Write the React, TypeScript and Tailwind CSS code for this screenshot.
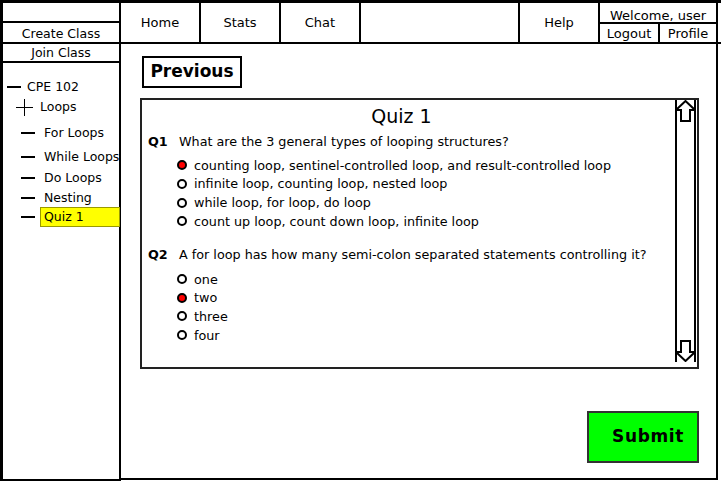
import React from "react";

const FONT = "font-['DejaVu_Sans',sans-serif]";

type Opt = { label: string; checked?: boolean };

const QUESTIONS: { id: string; text: string; options: Opt[] }[] = [
  {
    id: "Q1",
    text: "What are the 3 general types of looping structures?",
    options: [
      { label: "counting loop, sentinel-controlled loop, and result-controlled loop", checked: true },
      { label: "infinite loop, counting loop, nested loop" },
      { label: "while loop, for loop, do loop" },
      { label: "count up loop, count down loop, infinite loop" },
    ],
  },
  {
    id: "Q2",
    text: "A for loop has how many semi-colon separated statements controlling it?",
    options: [
      { label: "one" },
      { label: "two", checked: true },
      { label: "three" },
      { label: "four" },
    ],
  },
];

const TREE = [
  { label: "For Loops", top: 61 },
  { label: "While Loops", top: 85 },
  { label: "Do Loops", top: 106 },
  { label: "Nesting", top: 126 },
];

function Radio({ checked }: { checked?: boolean }) {
  return (
    <span
      className={`inline-block w-[10px] h-[10px] rounded-full border-2 border-black ${
        checked ? "bg-[#ff0000]" : "bg-white"
      }`}
    />
  );
}

function Dash() {
  return <span className="inline-block w-[14px] h-[2px] bg-black" />;
}

function Tab({ label, w }: { label: string; w: string }) {
  return (
    <div className={`${w} h-full flex items-center justify-center border-r-2 border-black`}>
      {label}
    </div>
  );
}

export default function App() {
  return (
    <div className={`w-[721px] h-[482px] bg-white text-black ${FONT} flex`}>
      {/* Sidebar */}
      <div className="w-[121px] h-[481px] border-l-[3px] border-t-[3px] border-r-2 border-b-2 border-black flex flex-col text-[12.5px]">
        <div className="h-[20px] border-b-2 border-black" />
        <div className="h-[21px] border-b-2 border-black flex items-end justify-center leading-none pb-[2px]">
          Create Class
        </div>
        <div className="h-[19px] border-b-2 border-black flex items-center justify-center pt-[2px]">
          Join Class
        </div>
        <div className="relative flex-1">
          <div className="absolute left-[4px] top-[15px] flex items-center gap-[6px]">
            <Dash />
            <span>CPE 102</span>
          </div>
          <div className="absolute left-[13px] top-[35px] flex items-center gap-[7px]">
            <svg width="17" height="17" viewBox="0 0 17 17">
              <path d="M0 8.5 H17 M8.5 0 V17" stroke="#000" strokeWidth="1" />
            </svg>
            <span>Loops</span>
          </div>
          {TREE.map((t) => (
            <div
              key={t.label}
              className="absolute left-[18px] flex items-center gap-[9px] whitespace-nowrap"
              style={{ top: t.top }}
            >
              <Dash />
              <span>{t.label}</span>
            </div>
          ))}
          <div className="absolute left-[18px] top-[144px] flex items-center gap-[5px]">
            <Dash />
            <span className="w-[80px] h-[20px] bg-[#ffff00] border border-[#999900] flex items-center pl-[3px]">
              Quiz 1
            </span>
          </div>
        </div>
      </div>

      {/* Right column */}
      <div className="flex-1 flex flex-col">
        <div className="h-[44px] border-t-[3px] border-b-2 border-black flex text-[13px]">
          <Tab label="Home" w="w-[80px]" />
          <Tab label="Stats" w="w-[80px]" />
          <Tab label="Chat" w="w-[80px]" />
          <div className="w-[159px] h-full border-r-2 border-black" />
          <Tab label="Help" w="w-[80px]" />
          <div className="w-[118px] h-full flex flex-col border-r-2 border-black">
            <div className="h-[21px] border-b-2 border-black flex items-start justify-center leading-none pt-[6px]">
              Welcome, user
            </div>
            <div className="flex-1 flex">
              <div className="w-[60px] border-r-2 border-black flex items-center justify-center">
                Logout
              </div>
              <div className="flex-1 flex items-center justify-center">Profile</div>
            </div>
          </div>
        </div>

        <div className="w-[597px] h-[436px] border-r-2 border-b-2 border-black flex flex-col pl-[19px] pt-[12px]">
          <div className="ml-[2px] w-[100px] h-[32px] border-2 border-black flex items-center justify-center font-bold text-[17px]">
            Previous
          </div>

          <div className="mt-[10px] w-[559px] h-[271px] border-2 border-[#222] flex">
            <div className="flex-1 flex flex-col pl-[6px] pt-[3px]">
              <div className="text-center text-[19px] leading-[26px] pr-[20px]">Quiz 1</div>
              {QUESTIONS.map((q, qi) => (
                <div key={q.id} className={qi === 0 ? "mt-[4px]" : "mt-[15px]"}>
                  <div className="flex items-center text-[12.75px] leading-[17px]">
                    <span className="font-bold w-[31px]">{q.id}</span>
                    <span>{q.text}</span>
                  </div>
                  <div
                    className={`${qi === 0 ? "mt-[6px]" : "mt-[7px]"} pl-[29px] flex flex-col text-[12.75px]`}
                  >
                    {q.options.map((o) => (
                      <div key={o.label} className="flex items-center gap-[7px] h-[18.7px]">
                        <Radio checked={o.checked} />
                        <span>{o.label}</span>
                      </div>
                    ))}
                  </div>
                </div>
              ))}
            </div>
            <div className="w-[21px] mr-[1px] border-l-2 border-r-2 border-black flex flex-col justify-between items-center mb-[5px]">
              <svg width="21" height="22" viewBox="0 0 21 22" className="-mx-[2px]">
                <path d="M10.5 1 L20 10 H15 V21 H6 V10 H1 Z" fill="#fff" stroke="#000" strokeWidth="2" />
              </svg>
              <svg width="21" height="22" viewBox="0 0 21 22" className="-mx-[2px]">
                <path d="M10.5 21 L20 12 H15 V1 H6 V12 H1 Z" fill="#fff" stroke="#000" strokeWidth="2" />
              </svg>
            </div>
          </div>

          <div className="flex justify-end pr-[17px] mt-[42px]">
            <div className="w-[112px] h-[52px] bg-[#00ff00] border-2 border-[#333] flex items-center justify-center font-bold text-[17px] tracking-[0.6px] pl-[10px]">
              Submit
            </div>
          </div>
        </div>
      </div>
    </div>
  );
}
